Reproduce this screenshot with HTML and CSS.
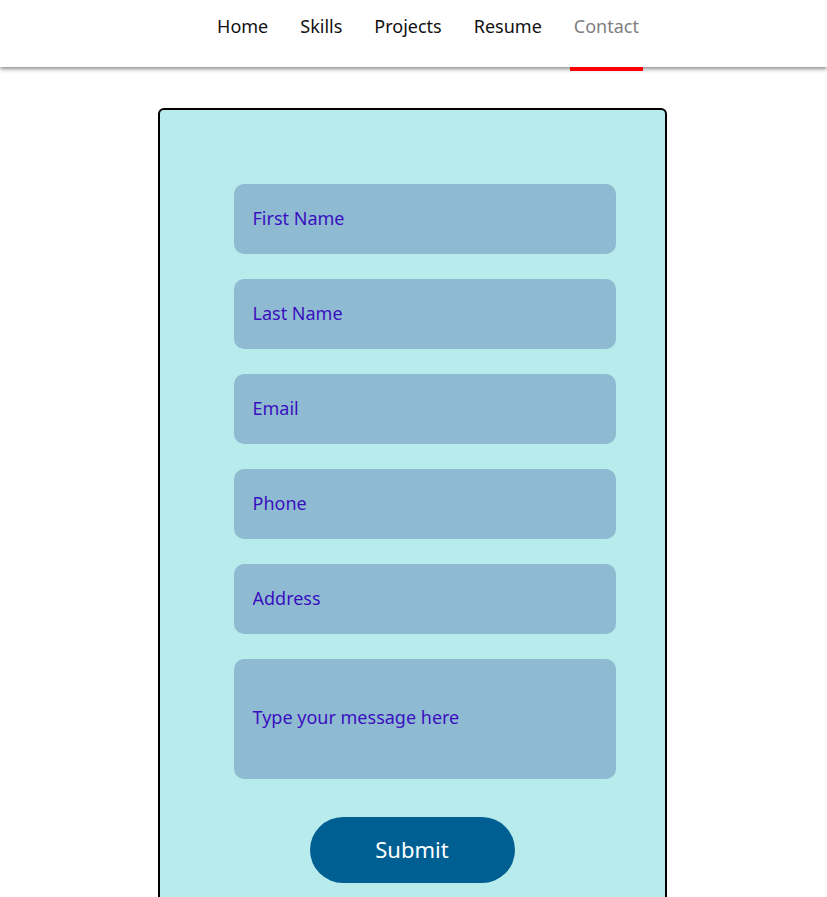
FILE: index.html
```
<!DOCTYPE html>
<html>
<head>
<meta charset="utf-8">
<link rel="stylesheet" href="styles.css">
</head>
<body>
<header class="topbar">
  <nav class="nav">
    <a class="nav-link" href="#">Home</a>
    <a class="nav-link" href="#">Skills</a>
    <a class="nav-link" href="#">Projects</a>
    <a class="nav-link" href="#">Resume</a>
    <a class="nav-link active" href="#">Contact</a>
  </nav>
</header>
<main class="page">
  <form class="card">
    <input class="field" type="text" placeholder="First Name">
    <input class="field" type="text" placeholder="Last Name">
    <input class="field" type="email" placeholder="Email">
    <input class="field" type="tel" placeholder="Phone">
    <input class="field" type="text" placeholder="Address">
    <textarea class="field message" placeholder="Type your message here"></textarea>
    <button class="submit" type="button">Submit</button>
  </form>
</main>
</body>
</html>
```
FILE: styles.css
```
* { box-sizing: border-box; }
html, body { margin: 0; padding: 0; background: #fff; }
body { font-family: "Noto Sans", "Open Sans", sans-serif; overflow: hidden; height: 897px; }

.topbar {
  height: 67px;
  background: #fff;
  box-shadow: 0 2px 4px rgba(0,0,0,0.45);
  position: relative;
  z-index: 1;
}
.nav {
  display: flex;
  justify-content: center;
  gap: 24px;
  height: 67px;
  padding-left: 29px;
}
.nav-link {
  display: block;
  padding: 14px 4px 0;
  height: 71px;
  font-size: 18px;
  color: #111;
  text-decoration: none;
  border-bottom: 4px solid transparent;
}
.nav-link.active {
  color: #808080;
  border-bottom-color: #ff0000;
}

.page {
  padding-top: 41px;
  padding-right: 3px;
  display: flex;
  justify-content: center;
}
.card {
  width: 509px;
  height: 860px;
  background: #b8ebeb;
  border: 2px solid #000;
  border-radius: 6px;
  padding: 74px 0 0 74px;
  display: flex;
  flex-direction: column;
  gap: 25px;
}
.field {
  width: 382px;
  height: 70px;
  flex: none;
  border: none;
  border-radius: 10px;
  background: #8fbbd2;
  padding: 0 19px 2px;
  font-family: inherit;
  font-size: 18px;
  color: #3a0fbf;
  outline: none;
}
.field::placeholder { color: #3a0fbf; opacity: 1; }
.message {
  height: 120px;
  resize: none;
  padding-top: 46px;
}
.submit {
  margin: 13px 0 0 76px;
  width: 205px;
  height: 66px;
  flex: none;
  border: none;
  border-radius: 33px;
  background: #005f92;
  color: #fff;
  font-family: inherit;
  font-size: 22px;
  padding-bottom: 3px;
}
```
